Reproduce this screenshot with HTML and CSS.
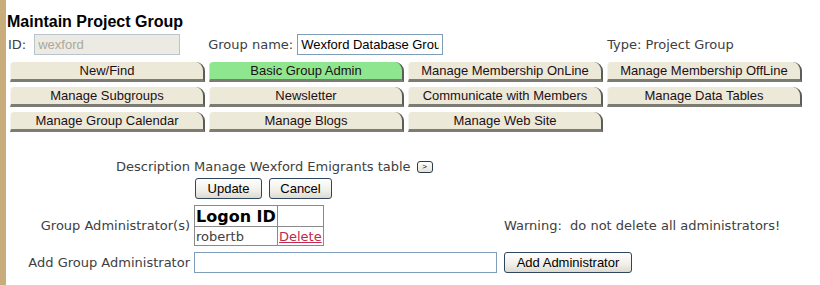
FILE: index.html
```html
<!DOCTYPE html>
<html lang="en">

<head>
    <meta charset="UTF-8">
    <title>Maintain Project Group</title>
    <link rel="stylesheet" href="styles.css">
</head>

<body>
    <div class="strip"></div>
    <div class="main">
        <h1 class="title">Maintain Project Group</h1>

        <div class="ident">
            <label for="gid">ID:</label>
            <input type="text" id="gid" class="field id-field" value="wexford" disabled>
            <label for="gname" class="gname-label">Group name:</label>
            <input type="text" id="gname" class="field name-field" value="Wexford Database Group">
            <span class="type">Type: Project Group</span>
        </div>

        <div class="tabs">
            <button class="tab">New/Find</button>
            <button class="tab active">Basic Group Admin</button>
            <button class="tab">Manage Membership OnLine</button>
            <button class="tab">Manage Membership OffLine</button>
            <button class="tab">Manage Subgroups</button>
            <button class="tab">Newsletter</button>
            <button class="tab">Communicate with Members</button>
            <button class="tab">Manage Data Tables</button>
            <button class="tab">Manage Group Calendar</button>
            <button class="tab">Manage Blogs</button>
            <button class="tab">Manage Web Site</button>
        </div>

        <form class="details">
            <div class="lbl desc-row">Description</div>
            <div class="desc desc-row">Manage Wexford Emigrants table <button type="button" class="more">&gt;</button></div>
            <div class="desc-row"></div>

            <div></div>
            <div class="actions">
                <button type="button" class="btn update">Update</button>
                <button type="button" class="btn cancel">Cancel</button>
            </div>
            <div></div>

            <div class="lbl">Group Administrator(s)</div>
            <div>
                <table class="admins">
                    <tr>
                        <th class="logon">Logon ID</th>
                        <th class="del"></th>
                    </tr>
                    <tr>
                        <td>robertb</td>
                        <td><a href="#">Delete</a></td>
                    </tr>
                </table>
            </div>
            <div class="warning">Warning:&nbsp; do not delete all administrators!</div>

            <div class="lbl">Add Group Administrator</div>
            <div><input type="text" class="field add-field"></div>
            <div><button type="button" class="btn add">Add Administrator</button></div>
        </form>
    </div>
</body>

</html>
```

FILE: styles.css
```css
body {
    margin: 0;
    display: flex;
    min-height: 100vh;
    background: #fff;
    font-family: "DejaVu Sans", Verdana, sans-serif;
    font-size: 13px;
    color: #404040;
}

.strip {
    width: 6px;
    flex: none;
    background: #c9ac7c;
}

.main {
    flex: 1;
    padding: 13px 0 0 2px;
}

.title {
    margin: 0 0 0 -1px;
    font-family: "Liberation Sans", Arial, sans-serif;
    font-size: 16px;
    line-height: 18px;
    font-weight: bold;
    color: #000;
}

/* id / name row */
.ident {
    display: flex;
    align-items: center;
    height: 21px;
    margin-top: 3px;
}

.field {
    box-sizing: border-box;
    height: 21px;
    border: 1px solid #7f9db9;
    padding: 0 3px;
    font-family: "Liberation Sans", Arial, sans-serif;
    font-size: 13px;
    color: #000;
    background: #fff;
    outline: none;
}

.id-field {
    width: 146px;
    margin-left: 8px;
    background: #ebebe4;
    color: #aca899;
    border-color: #b9c4cf;
}

.gname-label {
    margin-left: 28px;
}

.name-field {
    width: 146px;
    margin-left: 4px;
}

.type {
    margin-left: 164px;
}

/* tab buttons */
.tabs {
    display: grid;
    grid-template-columns: repeat(4, 195px);
    column-gap: 4px;
    row-gap: 5px;
    margin: 7px 0 0 2px;
}

.tab {
    box-sizing: border-box;
    height: 20px;
    padding: 0 0 1px;
    border: none;
    border-left: 1px solid #f6f4ec;
    border-right: 2px solid #5c5c58;
    border-bottom: 3px solid #7c7c74;
    border-radius: 4px 9px 0 0;
    background: #ece9d8;
    font-family: "Liberation Sans", Arial, sans-serif;
    font-size: 13px;
    color: #1e0f16;
    cursor: pointer;
}

.tab.active {
    background: #8ee68e;
    border-left-color: #b6f2b6;
}

/* lower form */
.details {
    display: grid;
    grid-template-columns: 184px 303px auto;
    column-gap: 4px;
    row-gap: 6px;
    align-items: center;
    margin: 27px 0 0 -2px;
}

.details > div:nth-child(3n) {
    padding-left: 3px;
}

.desc-row {
    margin-bottom: -2px;
}

.lbl {
    text-align: right;
    white-space: nowrap;
}

.desc {
    display: flex;
    align-items: center;
    height: 15px;
    white-space: nowrap;
}

.more {
    box-sizing: border-box;
    width: 16px;
    height: 12px;
    margin-left: 6px;
    padding: 0;
    border: 1px solid #2d3a4a;
    border-radius: 3px;
    background: linear-gradient(#fff, #e4e2d8);
    font-size: 8px;
    line-height: 8px;
    color: #000;
}

.actions {
    display: flex;
    gap: 7px;
    padding-left: 1px;
}

.btn {
    box-sizing: border-box;
    height: 21px;
    padding: 0 8px;
    border: 1px solid #2f4660;
    border-radius: 3px;
    background: linear-gradient(#fefefe, #f0efe9 60%, #dcdad0);
    font-family: "Liberation Sans", Arial, sans-serif;
    font-size: 13px;
    color: #000;
    cursor: pointer;
}

.update {
    width: 67px;
}

.cancel {
    width: 63px;
}

.add {
    width: 128px;
}

.admins {
    border-collapse: collapse;
    border: 1px solid #7a7a7a;
}

.admins th,
.admins td {
    border: 1px solid #8a8a8a;
    padding: 0 1px;
    text-align: left;
    height: 18px;
}

.admins th {
    font-size: 16px;
    color: #000;
    height: 20px;
}

.admins .logon {
    width: 80px;
}

.admins .del {
    width: 42px;
}

.admins a {
    color: #c2294c;
}

.add-field {
    width: 303px;
}
```
